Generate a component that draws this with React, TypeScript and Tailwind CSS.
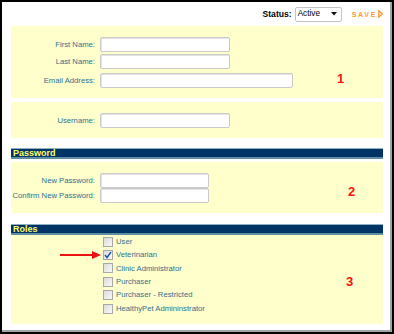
import React from "react";

// ─── Pieces ───────────────────────────────────────────────────────────────────

function Field({ label, width }: { label: string; width: string }) {
  return (
    <div className="flex h-[15px] items-center">
      <span className="w-[85px] pr-[1px] text-right text-[7.7px] leading-none text-[#2f6f8f]">
        {label}
      </span>
      <div
        className={`ml-[4px] h-[15px] ${width} rounded-[2px] border border-[#c9c9c9] bg-white shadow-[inset_1px_1px_0_#e4e4e4]`}
      />
    </div>
  );
}

function SectionBar({ title }: { title: string }) {
  return (
    <div className="flex h-[11px] items-center border-t border-b-2 border-t-[#8fb0bd] border-b-[#5e8fa0] bg-[#003366] pl-[2px]">
      <span className="text-[9px] font-bold leading-none text-[#ffff66]">{title}</span>
    </div>
  );
}

function Role({ label, checked, arrow }: { label: string; checked?: boolean; arrow?: boolean }) {
  return (
    <div className="flex h-[13.4px] items-center">
      <div className="flex w-[90px] items-center justify-end">
        {arrow && (
          <svg width="41" height="8" viewBox="0 0 41 8">
            <line x1="0" y1="4" x2="34" y2="4" stroke="#ee1111" strokeWidth="2" />
            <polygon points="32,0 41,4 32,8" fill="#ee1111" />
          </svg>
        )}
      </div>
      <div className="ml-[2px] flex h-[10px] w-[10px] items-center justify-center border border-[#a8a8a8] bg-gradient-to-br from-[#dcdcdc] to-[#f8f8f8]">
        {checked && (
          <svg width="8" height="8" viewBox="0 0 8 8">
            <path d="M1 4 L3 6.5 L7 1" stroke="#1d4fb0" strokeWidth="1.4" fill="none" />
          </svg>
        )}
      </div>
      <span className="ml-[3px] text-[7.7px] leading-none text-[#2f6f8f]">{label}</span>
    </div>
  );
}

function Marker({ n, className }: { n: string; className: string }) {
  return (
    <span className={`text-[13px] font-bold leading-none text-[#ff1111] ${className}`}>{n}</span>
  );
}

// ─── Page ─────────────────────────────────────────────────────────────────────

export default function App() {
  return (
    <div className="h-[334px] w-[394px] border-2 border-black bg-white font-['Liberation_Sans',Arial,sans-serif]">
      <div className="h-full border-r-2 border-b-2 border-[#a3a3a3] pl-[9px] pr-[7px]">
        {/* Top bar */}
        <div className="flex h-[24px] items-center justify-end">
          <span className="text-[8.6px] font-bold leading-none text-black">Status:</span>
          <div className="ml-[3px] flex h-[15px] w-[47px] items-center justify-between rounded-[2px] border border-[#c4c4c4] bg-white pl-[2px] pr-[4px]">
            <span className="text-[8.2px] leading-none text-black">Active</span>
            <svg width="6" height="4" viewBox="0 0 6 4">
              <polygon points="0,0 6,0 3,3.5" fill="#111" />
            </svg>
          </div>
          <div className="ml-[10px] flex items-center">
            <span className="text-[7px] font-bold leading-none tracking-[1.7px] text-[#ff9933]">SAVE</span>
            <svg width="5" height="8" viewBox="0 0 5 8" className="ml-[1px]">
              <path d="M0.8 0.8 L4.2 4 L0.8 7.2 Z" stroke="#ff9933" strokeWidth="1.3" fill="none" />
            </svg>
          </div>
        </div>

        {/* Personal */}
        <div className="flex h-[72px] bg-[#ffffcc] pt-[11px]">
          <div className="flex flex-col">
            <Field label="First Name:" width="w-[130px]" />
            <div className="mt-[2px]">
              <Field label="Last Name:" width="w-[130px]" />
            </div>
            <div className="mt-[4px]">
              <Field label="Email Address:" width="w-[193px]" />
            </div>
          </div>
          <Marker n="1" className="ml-[44px] mt-[35px]" />
        </div>

        {/* Username */}
        <div className="mt-[4px] h-[36px] bg-[#ffffcc] pt-[11px]">
          <Field label="Username:" width="w-[130px]" />
        </div>

        {/* Password */}
        <div className="mt-[10px]">
          <SectionBar title="Password" />
        </div>
        <div className="mt-[3px] flex h-[51px] bg-[#ffffcc] pt-[11px]">
          <div className="flex flex-col">
            <Field label="New Password:" width="w-[109px]" />
            <Field label="Confirm New Password:" width="w-[109px]" />
          </div>
          <Marker n="2" className="ml-[139px] mt-[12px]" />
        </div>

        {/* Roles */}
        <div className="mt-[11px]">
          <SectionBar title="Roles" />
        </div>
        <div className="flex h-[89px] bg-[#ffffcc]">
          <div className="flex flex-col">
            <Role label="User" />
            <Role label="Veterinarian" checked arrow />
            <Role label="Clinic Administrator" />
            <Role label="Purchaser" />
            <Role label="Purchaser - Restricted" />
            <Role label="HealthyPet Admininstrator" />
          </div>
          <Marker n="3" className="ml-[141px] mt-[40px]" />
        </div>
      </div>
    </div>
  );
}
